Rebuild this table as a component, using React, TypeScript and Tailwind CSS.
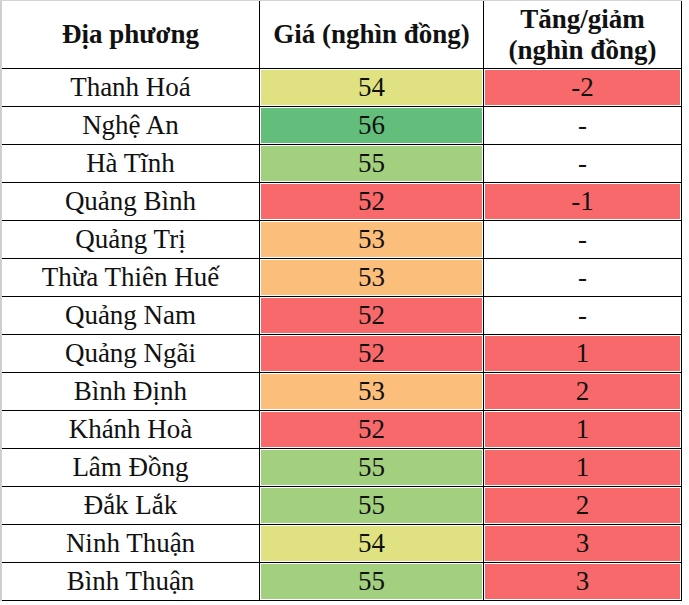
import React from "react";

const C = {
  r: "bg-[#f8696b]",
  o: "bg-[#fcbf7b]",
  y: "bg-[#e0e282]",
  lg: "bg-[#a2d07f]",
  g: "bg-[#63be7b]",
};

type Row = { name: string; price: string; pc: string; diff: string; dc: string };

const rows: Row[] = [
  { name: "Thanh Hoá", price: "54", pc: C.y, diff: "-2", dc: C.r },
  { name: "Nghệ An", price: "56", pc: C.g, diff: "-", dc: "" },
  { name: "Hà Tĩnh", price: "55", pc: C.lg, diff: "-", dc: "" },
  { name: "Quảng Bình", price: "52", pc: C.r, diff: "-1", dc: C.r },
  { name: "Quảng Trị", price: "53", pc: C.o, diff: "-", dc: "" },
  { name: "Thừa Thiên Huế", price: "53", pc: C.o, diff: "-", dc: "" },
  { name: "Quảng Nam", price: "52", pc: C.r, diff: "-", dc: "" },
  { name: "Quảng Ngãi", price: "52", pc: C.r, diff: "1", dc: C.r },
  { name: "Bình Định", price: "53", pc: C.o, diff: "2", dc: C.r },
  { name: "Khánh Hoà", price: "52", pc: C.r, diff: "1", dc: C.r },
  { name: "Lâm Đồng", price: "55", pc: C.lg, diff: "1", dc: C.r },
  { name: "Đắk Lắk", price: "55", pc: C.lg, diff: "2", dc: C.r },
  { name: "Ninh Thuận", price: "54", pc: C.y, diff: "3", dc: C.r },
  { name: "Bình Thuận", price: "55", pc: C.lg, diff: "3", dc: C.r },
];

function Cell({ w, color, children }: { w: string; color: string; children: React.ReactNode }) {
  return (
    <div className={`${w} h-full border-r border-black p-px bg-white`}>
      <div className={`h-full w-full flex items-center justify-center ${color}`}>{children}</div>
    </div>
  );
}

export default function App() {
  return (
    <div className="w-[689px] h-[605px] bg-white text-[#111] overflow-hidden font-['Liberation_Serif','Times_New_Roman',serif]">
      <div className="w-[682px] border-l-2 border-l-[#cfcfcf] border-t border-t-[#d4d4d4]">
        <div className="flex h-[68px] border-b border-black font-bold text-[27px] leading-[31px]">
          <div className="w-[258px] h-full border-r border-black flex items-center justify-center">
            Địa phương
          </div>
          <div className="w-[224px] h-full border-r border-black flex items-center justify-center">
            Giá (nghìn đồng)
          </div>
          <div className="w-[198px] h-full border-r border-black flex flex-col items-center justify-center text-center">
            <span>Tăng/giảm</span>
            <span>(nghìn đồng)</span>
          </div>
        </div>
        {rows.map((r) => (
          <div key={r.name} className="flex h-[38px] border-b border-black text-[27px] leading-none">
            <Cell w="w-[258px]" color="">
              {r.name}
            </Cell>
            <Cell w="w-[224px]" color={r.pc}>
              {r.price}
            </Cell>
            <Cell w="w-[198px]" color={r.dc}>
              {r.diff}
            </Cell>
          </div>
        ))}
      </div>
    </div>
  );
}
